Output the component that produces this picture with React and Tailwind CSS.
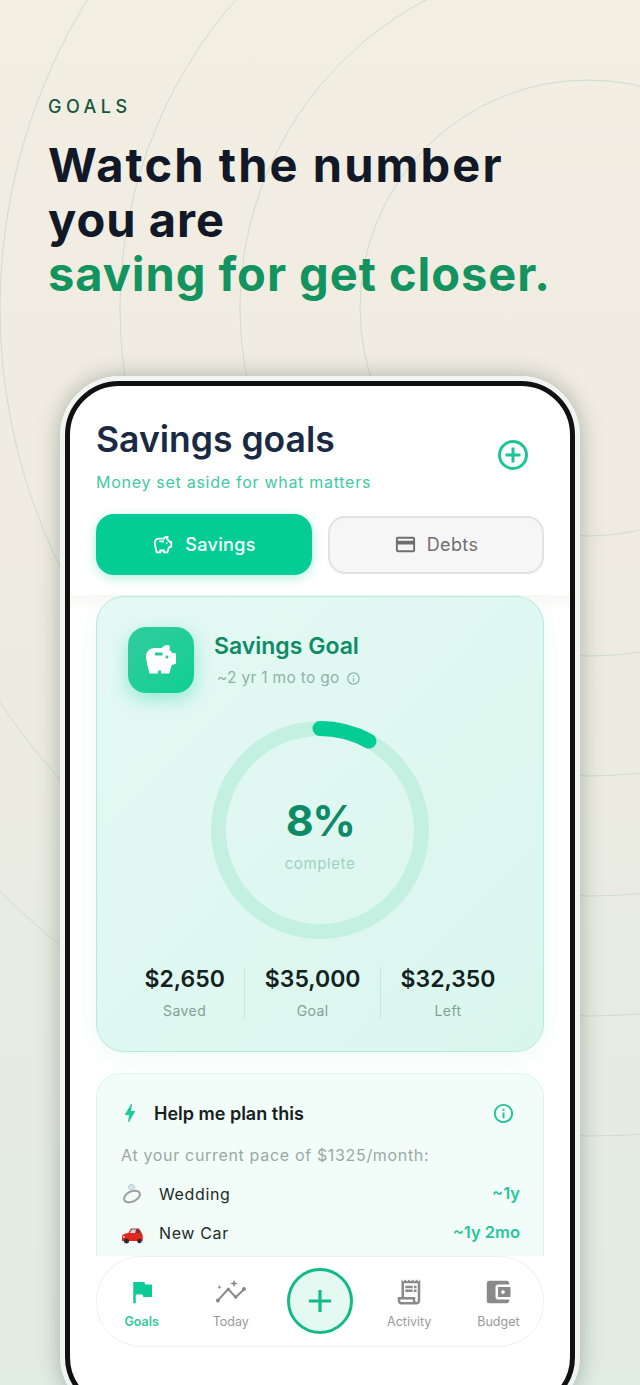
import React from 'react';
import { MdFlag, MdOutlineReceiptLong, MdAccountBalanceWallet, MdOutlineSavings, MdSavings, MdCreditCard, MdBolt, MdInfoOutline, MdAdd } from 'react-icons/md';

const RINGS = [228, 348, 468, 588, 708, 828];

function RingIcon() {
  return (
    <svg width="24" height="24" viewBox="0 0 24 24" fill="none">
      <ellipse cx="11" cy="14.500" rx="8.500" ry="5" stroke="#9a9f9e" strokeWidth="2" transform="rotate(-25 11 14.500)" />
      <path d="M7 5l2-2.500h3l2 2.500-2.500 3.500h-2z" fill="#cfe6ef" stroke="#a5bcc5" strokeWidth="0.7" />
    </svg>
  );
}

function CarIcon() {
  return (
    <svg width="24" height="24" viewBox="0 0 24 24" fill="none">
      <path d="M7 12.500l3-5h8l3 5z" fill="#c92a24" />
      <path d="M8.500 12.500l2.300-4h4.200l-1 4z" fill="#bfe0ee" />
      <path d="M15.500 8.500h2l2 4h-4.500z" fill="#6d3b3b" />
      <path d="M1 20v-4c0-1.800 1.200-2.800 3-3.200l3-.8h13.500c.8.800 1.200 1.800 1.200 3v5z" fill="#e2261f" />
      <circle cx="2.800" cy="16" r="1" fill="#f7e7a0" />
      <circle cx="5.500" cy="20" r="2.500" fill="#2b2b2b" />
      <circle cx="18.500" cy="20" r="2.300" fill="#2b2b2b" />
    </svg>
  );
}

function TodayIcon({ className }) {
  return (
    <svg className={className} width="30" height="30" viewBox="0 0 30 30" fill="currentColor">
      <path d="M1.700 23.700L12.300 12l7.400 8.300L28.300 12" fill="none" stroke="currentColor" strokeWidth="2" />
      <circle cx="1.900" cy="23.500" r="2" />
      <circle cx="12.300" cy="12.500" r="1.800" />
      <circle cx="19.700" cy="20" r="1.800" />
      <circle cx="28" cy="12" r="2" />
      <path d="M18 2.500l1 3 3 1-3 1-1 3-1-3-3-1 3-1z" />
      <path d="M3.500 8l.6 1.600 1.600.6-1.600.6-.6 1.600-.6-1.600-1.600-.6 1.600-.6z" />
    </svg>
  );
}

function Stat({ value, label, last }) {
  return (
    <div className={`px-[19.500px] h-[52px] flex flex-col items-center ${last ? '' : 'border-r border-[#c5eadd]'}`}>
      <div className="text-[23px] leading-[24px] font-semibold text-[#12211d]">{value}</div>
      <div className="mt-[12px] text-[14px] leading-[16px] tracking-[0.03em] text-[#83a096]">{label}</div>
    </div>
  );
}

function NavItem({ icon: Icon, label, active }) {
  return (
    <div className="flex flex-col items-center pt-[20px]">
      <Icon size={30} className={active ? 'text-[#0ccb94]' : 'text-[#8a8a8a]'} />
      <div className={`mt-[7px] text-[12.500px] leading-[16px] ${active ? 'font-semibold text-[#35c79d]' : 'text-[#999]'}`}>{label}</div>
    </div>
  );
}

function PlanRow({ icon, name, time }) {
  return (
    <div className="flex items-center h-[39px]">
      <div className="w-[38px]">{icon}</div>
      <div className="flex-1 text-[16px] tracking-[0.04em] text-[#222b28]">{name}</div>
      <div className="mr-[-1px] text-[16.500px] font-semibold text-[#25c79a]">{time}</div>
    </div>
  );
}

export default function App() {
  return (
    <div className="relative w-[640px] h-[1385px] overflow-hidden bg-linear-to-b from-[#f3eee2] via-[#eeebe1] via-45% to-[#e1ece3] font-['Inter',sans-serif]">
      <svg className="absolute inset-0" width="640" height="1385" fill="none">
        {RINGS.map(r => (
          <circle key={r} cx="588" cy="308" r={r} stroke="#cfdccf" strokeWidth="1" />
        ))}
      </svg>

      <div className="relative h-[376px] pl-[48px] pt-[97px]">
        <div className="text-[18px] leading-[20px] font-medium tracking-[0.25em] text-[#14573f]">GOALS</div>
        <h1 className="mt-[21px] text-[47px] leading-[54.500px] font-bold text-[#111827]">
          <span className="tracking-[2.100px]">Watch the number</span><br />
          <span className="tracking-[1px]">you are</span><br />
          <span className="tracking-[0.950px] text-[#12935f]">saving for get closer.</span>
        </h1>
      </div>

      <div className="relative mx-[60px] h-[1040px] rounded-[60px] border-[5px] border-[#f0f5f2] shadow-[0_0_22px_rgba(60,80,70,0.38)]">
        <div className="h-full rounded-[54px] border-[5px] border-[#111] bg-white overflow-hidden">
          <div className="px-[26px] pt-[32px] h-[209px]">
            <div className="flex justify-between">
              <div>
                <div className="text-[35.500px] leading-[44px] font-semibold text-[#1a2a44]">Savings goals</div>
                <div className="mt-[10px] text-[16px] leading-[20px] tracking-[0.045em] text-[#3fcaa3]">Money set aside for what matters</div>
              </div>
              <svg className="mt-[21px] mr-[15px]" width="32" height="32" viewBox="0 0 32 32" fill="none" stroke="#1cc596" strokeWidth="3">
                <circle cx="16" cy="16" r="13.500" />
                <path d="M16 8.500v15M8.500 16h15" />
              </svg>
            </div>
            <div className="mt-[22px] flex items-center gap-[16px]">
              <div className="w-[216px] h-[61px] rounded-[18px] bg-[#03cc94] shadow-[0_3px_12px_rgba(3,204,148,0.3)] flex items-center justify-center gap-[11px] text-white">
                <MdOutlineSavings size={22} />
                <span className="text-[18px] font-medium tracking-[0.02em]">Savings</span>
              </div>
              <div className="w-[216px] h-[58px] rounded-[17px] bg-[#f6f6f6] border-2 border-[#e2e2e2] flex items-center justify-center gap-[10px] text-[#6f6f6f]">
                <MdCreditCard size={23} />
                <span className="text-[18px] tracking-[0.02em]">Debts</span>
              </div>
            </div>
          </div>

          <div className="h-[661px] overflow-hidden px-[26px] pt-[1px] bg-linear-to-b from-[#f8f8f7] to-white to-[18px]">
            <div className="h-[456px] rounded-[28px] border border-[#b5ecd9] bg-linear-to-br from-[#e4f9f3] to-[#d9f6ed] shadow-[0_6px_24px_rgba(0,204,146,0.07)] pt-[30px] px-[31px]">
              <div className="flex">
                <div className="w-[66px] h-[66px] rounded-[18px] bg-linear-to-br from-[#2fcb9c] to-[#0ad093] shadow-[0_6px_18px_rgba(3,204,148,0.35)] flex items-center justify-center text-white">
                  <MdSavings size={36} />
                </div>
                <div className="ml-[20px]">
                  <div className="mt-[3px] text-[23px] leading-[32px] font-semibold text-[#0e8a66]">Savings Goal</div>
                  <div className="mt-[6px] ml-[3px] flex items-center gap-[6px] text-[15.500px] leading-[20px] tracking-[0.02em] text-[#8bb3a6]">
                    ~2 yr 1 mo to go <MdInfoOutline size={15} />
                  </div>
                </div>
              </div>

              <div className="relative mt-[28px] mx-auto w-[218px] h-[218px]">
                <svg width="218" height="218" viewBox="0 0 218 218" fill="none">
                  <circle cx="109" cy="109" r="101.500" stroke="#c3f0e1" strokeWidth="15" />
                  <path d="M109 7.500A101.500 101.500 0 0 1 157.900 20.100" stroke="#03cc94" strokeWidth="15" strokeLinecap="round" />
                </svg>
                <div className="absolute inset-0 flex flex-col items-center pt-[72px]">
                  <div className="text-[43px] leading-[54px] font-bold tracking-[-1.500px] text-[#0d8a66]">8%</div>
                  <div className="mt-[7px] text-[15px] leading-[20px] tracking-[0.04em] text-[#9ad4c0]">complete</div>
                </div>
              </div>

              <div className="mt-[28px] flex justify-center">
                <Stat value="$2,650" label="Saved" />
                <Stat value="$35,000" label="Goal" />
                <Stat value="$32,350" label="Left" last />
              </div>
            </div>

            <div className="mt-[21px] h-[240px] rounded-[24px] border border-[#dcf5ed] bg-[#f2fcf9] px-[24px] pt-[26px]">
              <div className="flex items-center h-[26px]">
                <MdBolt size={24} className="text-[#1fcb9a] ml-[-3px]" />
                <div className="ml-[12px] flex-1 text-[18px] font-semibold text-[#16201d]">Help me plan this</div>
                <MdInfoOutline size={23} className="text-[#23c49a] mr-[4px]" />
              </div>
              <div className="mt-[17px] text-[16px] leading-[24px] tracking-[0.042em] text-[#9aa9a4]">At your current pace of $1325/month:</div>
              <div className="mt-[7px]">
                <PlanRow icon={<RingIcon />} name="Wedding" time="~1y" />
                <PlanRow icon={<CarIcon />} name="New Car" time="~1y 2mo" />
              </div>
            </div>
          </div>

          <div className="mx-[26px] h-[91px] rounded-[45px] border border-[#efefef] bg-white grid grid-cols-5">
            <NavItem icon={MdFlag} label="Goals" active />
            <NavItem icon={TodayIcon} label="Today" />
            <div className="flex justify-center pt-[11px]">
              <div className="w-[66px] h-[66px] rounded-full border-[3px] border-[#14b98a] bg-[#e2f8f0] flex items-center justify-center text-[#14b98a]">
                <MdAdd size={38} />
              </div>
            </div>
            <NavItem icon={MdOutlineReceiptLong} label="Activity" />
            <NavItem icon={MdAccountBalanceWallet} label="Budget" />
          </div>
        </div>
      </div>
    </div>
  );
}
